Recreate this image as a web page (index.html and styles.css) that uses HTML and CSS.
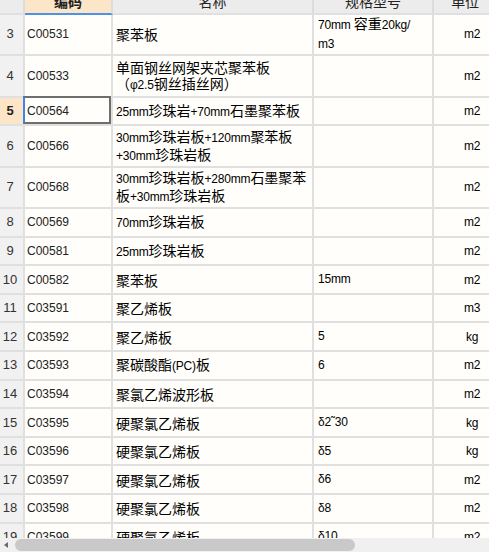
FILE: index.html
```html
<!DOCTYPE html>
<html lang="zh">
<head>
<meta charset="utf-8">
<link rel="stylesheet" href="styles.css">
</head>
<body>
<div class="sheet">
  <div class="grid">
    <div class="rows">
      <div class="row head">
        <div class="c n"></div>
        <div class="c code active">编码</div>
        <div class="c name">名称</div>
        <div class="c spec">规格型号</div>
        <div class="c unit">单位</div>
      </div>
      <div class="row tall">
        <div class="c n">3</div><div class="c code">C00531</div><div class="c name">聚苯板</div><div class="c spec"><span><span class="en">70mm </span>容重<span class="en">20kg/</span><br><span class="en">m3</span></span></div><div class="c unit">m2</div>
      </div>
      <div class="row tall">
        <div class="c n">4</div><div class="c code">C00533</div><div class="c name"><span>单面钢丝网架夹芯聚苯板<br>（<span class="en">φ2.5</span>钢丝插丝网）</span></div><div class="c spec"></div><div class="c unit">m2</div>
      </div>
      <div class="row">
        <div class="c n cur">5</div><div class="c code sel">C00564</div><div class="c name"><span><span class="en">25mm</span>珍珠岩<span class="en">+70mm</span>石墨聚苯板</span></div><div class="c spec"></div><div class="c unit">m2</div>
      </div>
      <div class="row tall">
        <div class="c n">6</div><div class="c code">C00566</div><div class="c name"><span><span class="en">30mm</span>珍珠岩板<span class="en">+120mm</span>聚苯板<br><span class="en">+30mm</span>珍珠岩板</span></div><div class="c spec"></div><div class="c unit">m2</div>
      </div>
      <div class="row tall">
        <div class="c n">7</div><div class="c code">C00568</div><div class="c name"><span><span class="en">30mm</span>珍珠岩板<span class="en">+280mm</span>石墨聚苯<br>板<span class="en">+30mm</span>珍珠岩板</span></div><div class="c spec"></div><div class="c unit">m2</div>
      </div>
      <div class="row">
        <div class="c n">8</div><div class="c code">C00569</div><div class="c name"><span><span class="en">70mm</span>珍珠岩板</span></div><div class="c spec"></div><div class="c unit">m2</div>
      </div>
      <div class="row">
        <div class="c n">9</div><div class="c code">C00581</div><div class="c name"><span><span class="en">25mm</span>珍珠岩板</span></div><div class="c spec"></div><div class="c unit">m2</div>
      </div>
      <div class="row">
        <div class="c n">10</div><div class="c code">C00582</div><div class="c name">聚苯板</div><div class="c spec"><span class="en">15mm</span></div><div class="c unit">m2</div>
      </div>
      <div class="row">
        <div class="c n">11</div><div class="c code">C03591</div><div class="c name">聚乙烯板</div><div class="c spec"></div><div class="c unit">m3</div>
      </div>
      <div class="row">
        <div class="c n">12</div><div class="c code">C03592</div><div class="c name">聚乙烯板</div><div class="c spec"><span class="en">5</span></div><div class="c unit">kg</div>
      </div>
      <div class="row">
        <div class="c n">13</div><div class="c code">C03593</div><div class="c name"><span>聚碳酸酯<span class="en">(PC)</span>板</span></div><div class="c spec"><span class="en">6</span></div><div class="c unit">m2</div>
      </div>
      <div class="row">
        <div class="c n">14</div><div class="c code">C03594</div><div class="c name">聚氯乙烯波形板</div><div class="c spec"></div><div class="c unit">m2</div>
      </div>
      <div class="row">
        <div class="c n">15</div><div class="c code">C03595</div><div class="c name">硬聚氯乙烯板</div><div class="c spec"><span class="en">δ2˜30</span></div><div class="c unit">kg</div>
      </div>
      <div class="row">
        <div class="c n">16</div><div class="c code">C03596</div><div class="c name">硬聚氯乙烯板</div><div class="c spec"><span class="en">δ5</span></div><div class="c unit">kg</div>
      </div>
      <div class="row">
        <div class="c n">17</div><div class="c code">C03597</div><div class="c name">硬聚氯乙烯板</div><div class="c spec"><span class="en">δ6</span></div><div class="c unit">m2</div>
      </div>
      <div class="row">
        <div class="c n">18</div><div class="c code">C03598</div><div class="c name">硬聚氯乙烯板</div><div class="c spec"><span class="en">δ8</span></div><div class="c unit">m2</div>
      </div>
      <div class="row">
        <div class="c n">19</div><div class="c code">C03599</div><div class="c name">硬聚氯乙烯板</div><div class="c spec"><span class="en">δ10</span></div><div class="c unit">m2</div>
      </div>
    </div>
  </div>
  <div class="hscroll">
    <span class="arrow"></span>
    <div class="thumb"></div>
  </div>
</div>
</body>
</html>
```

FILE: styles.css
```css
html, body {
  margin: 0;
  padding: 0;
  overflow: hidden;
  background: #fffefa;
}

.sheet {
  width: 489px;
  height: 552px;
  display: flex;
  flex-direction: column;
  overflow: hidden;
  font-family: "Noto Sans CJK SC", "Liberation Sans", sans-serif;
  color: #000;
}

.grid {
  flex: 1;
  min-height: 0;
  overflow: hidden;
}

.rows {
  margin-top: -10px;
  width: 514px;
}

.row {
  display: grid;
  grid-template-columns: 25px 88px 201px 120px 80px;
  height: 28.6px;
}

.row.tall {
  height: 41.5px;
}

.row.head {
  height: 24.5px;
}

.c {
  box-sizing: border-box;
  border-right: 2px solid #e0e0e0;
  border-bottom: 2px solid #e0e0e0;
  display: flex;
  align-items: center;
  padding-left: 3px;
  white-space: nowrap;
  overflow: hidden;
  font-size: 14px;
  line-height: 16px;
  background: #fffefa;
}

.en {
  font-family: "Liberation Sans", "DejaVu Sans", sans-serif;
  font-size: 12px;
  letter-spacing: -0.2px;
}

.c.n,
.c.code,
.c.unit {
  font-family: "Liberation Sans", "DejaVu Sans", sans-serif;
  font-size: 12px;
}

.c.n {
  background: #f1f1f1;
  justify-content: center;
  padding: 0 3px 0 0;
  font-size: 13px;
  color: #333;
}

.c.n.cur {
  background: #fde6c8;
  font-weight: bold;
  color: #222;
}

.c.code {
  padding-left: 2px;
  color: #222;
}

.c.spec {
  padding-left: 4px;
  line-height: 17px;
}

.c.unit {
  justify-content: center;
  padding: 0 2px 0 0;
  letter-spacing: -0.3px;
}

.row.head .c {
  background: #ececec;
  justify-content: center;
  padding: 0;
  font-family: "Noto Sans CJK SC", sans-serif;
  font-size: 14px;
  color: #222;
  border-right-color: #dcdcdc;
}

.row.head .c.active {
  background: #fde6c8;
  border-bottom: 2px solid #4a93e6;
  font-weight: bold;
}

.row.head .c.unit {
  padding-right: 16px;
}

.c.sel {
  position: relative;
  overflow: visible;
}

.c.sel::after {
  content: "";
  position: absolute;
  left: -2px;
  top: -2px;
  right: 0;
  bottom: 0;
  border: 2px solid #6e6e6e;
  border-left-color: #3b86e8;
}

.hscroll {
  height: 14px;
  flex: none;
  background: #f0f0f0;
  display: flex;
  align-items: center;
  padding-left: 4px;
  gap: 7px;
}

.arrow {
  width: 0;
  height: 0;
  border-top: 3.5px solid transparent;
  border-bottom: 3.5px solid transparent;
  border-right: 4px solid #6a6a6a;
}

.thumb {
  width: 340px;
  height: 12px;
  border-radius: 6px;
  background: #c9c9c9;
}
```
